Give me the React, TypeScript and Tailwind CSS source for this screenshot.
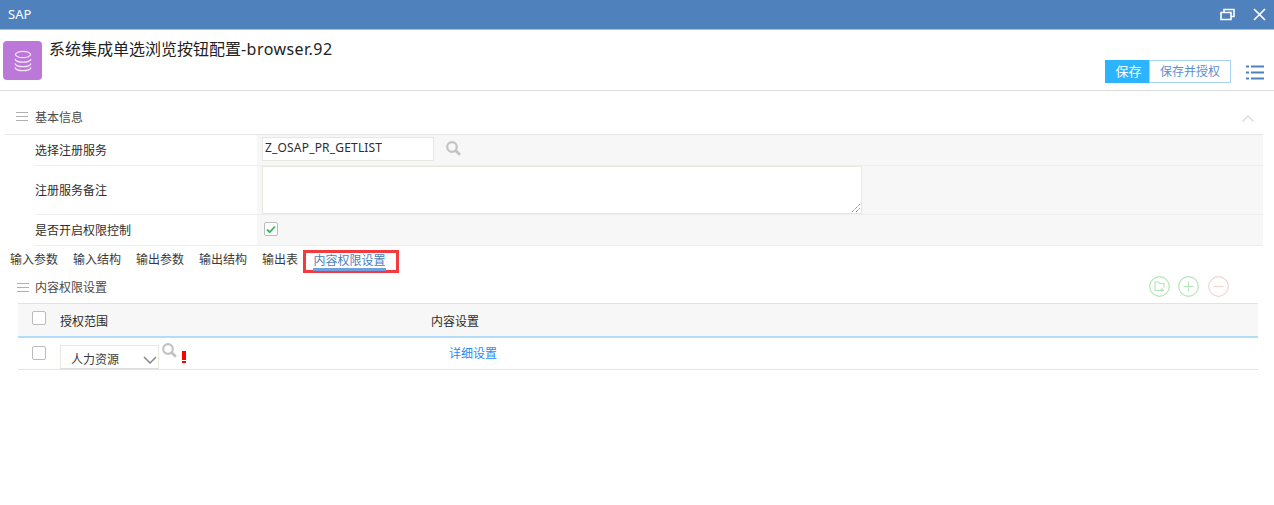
import React from "react";

const font = { fontFamily: '"Noto Sans","Noto Sans CJK SC",sans-serif' };

function Lines({ className }: { className: string }) {
  return (
    <svg width="12" height="10" viewBox="0 0 12 10" className={className}>
      <path d="M0 .5h12M0 4.5h12M0 8.5h12" stroke="#b0b0b0" strokeWidth="1" />
    </svg>
  );
}

function Search({ className }: { className: string }) {
  return (
    <svg width="15" height="15" viewBox="0 0 15 15" className={className}>
      <circle cx="6" cy="6" r="4.800" fill="none" stroke="#c2c2c2" strokeWidth="2.200" />
      <path d="M9.500 9.500l4.500 4.200" stroke="#c2c2c2" strokeWidth="2.800" />
    </svg>
  );
}

function Tab({ label }: { label: string }) {
  return <span className="text-[12px] leading-[16px] text-[#3a3a3a] mr-[14px] mt-[2px] w-[49px]">{label}</span>;
}

function Row({ label, h, children }: { label: string; h: string; children: React.ReactNode }) {
  return (
    <div className={`flex ${h}`}>
      <div className="w-[252px] pl-[30px] shrink-0">
        <div className="h-full flex items-center text-[12px] text-[#2e2e2e] border-b border-[#eeeeee] pt-[2px]">{label}</div>
      </div>
      <div className="flex-1 bg-[#f7f7f7] border-b border-[#eeeeee] flex items-start">{children}</div>
    </div>
  );
}

export default function App() {
  return (
    <div className="w-[1274px] h-[505px] bg-white overflow-hidden" style={font}>
      <div className="h-[30px] bg-[#4f81bd] border-b border-[#a9bcd3] flex items-center justify-between pl-[8px] pr-[8px]">
        <span className="text-[13px] text-white">SAP</span>
        <div className="flex items-center gap-[18px]">
          <svg width="15" height="13" viewBox="0 0 15 13">
            <path d="M1 4.500h10v7H1zM4 4V1.500h10V8.500h-3" fill="none" stroke="#fff" strokeWidth="1.600" />
          </svg>
          <svg width="13" height="13" viewBox="0 0 13 13">
            <path d="M1 1l11 11M12 1L1 12" stroke="#fff" strokeWidth="1.700" />
          </svg>
        </div>
      </div>

      <div className="h-[61px] border-b border-[#dddddd] flex relative">
        <div className="w-[39px] h-[39px] ml-[3px] mt-[11px] rounded-[4px] bg-[#bb78d9] flex items-center justify-center">
          <svg width="18" height="22" viewBox="0 0 18 22" fill="none" stroke="#f3e4fa" strokeWidth="1.300">
            <ellipse cx="9" cy="4.500" rx="7.500" ry="3.200" />
            <path d="M1 9c.6 1.900 3.800 3.200 8 3.200s7.400-1.300 8-3.200M1 13.500c.6 1.900 3.800 3.200 8 3.200s7.400-1.300 8-3.200M1 17.500c.6 1.900 3.800 3.200 8 3.200s7.400-1.300 8-3.200" />
          </svg>
        </div>
        <div className="ml-[7px] mt-[8px] text-[16px] leading-[22px] text-[#222]">
          系统集成单选浏览按钮配置<span className="tracking-[0.45px]">-browser.92</span>
        </div>
        <div className="ml-auto mt-[30px] mr-[10px] flex items-start">
          <div className="w-[44px] h-[23px] bg-[#2db4ff] text-white text-[13px] leading-[23px] text-center pl-[3px]">保存</div>
          <div className="w-[82px] h-[23px] border border-[#a9d0f5] text-[#5b8fd0] text-[12px] leading-[21px] text-center">保存并授权</div>
          <svg width="18" height="15" viewBox="0 0 18 15" className="ml-[15px] mt-[5px]">
            <path d="M0 1.500h3M5 1.500h13M0 7.500h3M5 7.500h13M0 13.500h3M5 13.500h13" stroke="#4f81bd" strokeWidth="2" />
          </svg>
        </div>
      </div>

      <div className="h-[43px] pl-[16px] pr-[20px] flex items-center">
        <Lines className="mr-[7px] mt-[9px]" />
        <span className="text-[12px] text-[#4a4a4a] mt-[11px]">基本信息</span>
        <svg width="12" height="7" viewBox="0 0 12 7" className="ml-auto mt-[11px]">
          <path d="M.5 6.500l5.500-5.500 5.500 5.500" fill="none" stroke="#d8d8d8" strokeWidth="1.200" />
        </svg>
      </div>

      <div className="ml-[5px] w-[1258px] border-t border-[#e6e6e6]">
        <Row label="选择注册服务" h="h-[31px]">
          <div className="ml-[5px] mt-[2px] w-[172px] h-[24px] bg-white border border-[#e8e8e0] pl-[2px] text-[12px] leading-[20px] text-[#2e2e2e] tracking-[0.18px]">Z_OSAP_PR_GETLIST</div>
          <Search className="ml-[12px] mt-[6px]" />
        </Row>
        <Row label="注册服务备注" h="h-[49px]">
          <div className="ml-[5px] w-[600px] h-[48px] bg-white border border-[#e8e8e0] relative">
            <svg width="8" height="8" viewBox="0 0 8 8" className="absolute right-[1px] bottom-[1px]">
              <path d="M0 8l8-8M4 8l4-4" stroke="#666" strokeWidth="1" strokeDasharray="1 1" />
            </svg>
          </div>
        </Row>
        <Row label="是否开启权限控制" h="h-[31px]">
          <div className="ml-[7px] mt-[7px] w-[14px] h-[14px] bg-white border border-[#bbbbbb] rounded-[2px] flex items-center justify-center">
            <svg width="10" height="9" viewBox="0 0 10 9">
              <path d="M1 4.500l2.700 2.700L9 1.500" fill="none" stroke="#3cb85c" strokeWidth="1.800" />
            </svg>
          </div>
        </Row>
      </div>

      <div className="h-[27px] pl-[10px] flex items-start pt-[4px]">
        <Tab label="输入参数" />
        <Tab label="输入结构" />
        <Tab label="输出参数" />
        <Tab label="输出结构" />
        <span className="text-[12px] leading-[16px] text-[#3a3a3a] w-[36px] mr-[5px] mt-[2px]">输出表</span>
        <div className="w-[96px] h-[23px] border-[3px] border-[#f23a3f] flex justify-center pr-[3px]">
          <span className="text-[12px] leading-[15px] text-[#4a7fc0] h-[18px] border-b-[3px] border-[#6f9fdc]">内容权限设置</span>
        </div>
      </div>

      <div className="h-[30px] pl-[17px] pr-[45px] flex items-start">
        <Lines className="mr-[6px] mt-[10px]" />
        <span className="text-[12px] text-[#4a4a4a] mt-[6px]">内容权限设置</span>
        <div className="ml-auto flex gap-[8px] mt-[3px]">
          <svg width="21" height="21" viewBox="0 0 21 21" fill="none" stroke="#b5e6b8" strokeWidth="1.200">
            <circle cx="10.500" cy="10.500" r="9.800" />
            <path d="M15 14.500H6V6h3.500l1.200 1.500H15v4M13 12v4M11 14h4" />
          </svg>
          <svg width="21" height="21" viewBox="0 0 21 21" fill="none" stroke="#b5e6b8" strokeWidth="1.200">
            <circle cx="10.500" cy="10.500" r="9.800" />
            <path d="M10.500 5.500v10M5.500 10.500h10" />
          </svg>
          <svg width="21" height="21" viewBox="0 0 21 21" fill="none" stroke="#f6d3d3" strokeWidth="1.200" className="ml-[1px]">
            <circle cx="10.500" cy="10.500" r="9.800" />
            <path d="M5.500 10.500h10" />
          </svg>
        </div>
      </div>

      <div className="ml-[18px] w-[1240px]">
        <div className="h-[35px] border-t border-[#e2e2e2] border-b-2 border-b-[#b3dcf7] bg-[#f7f7f7] flex items-start">
          <div className="w-[14px] h-[14px] ml-[14px] mt-[7px] border border-[#bbbbbb] bg-white rounded-[2px]" />
          <span className="w-[371px] ml-[14px] mt-[9px] text-[12px] text-[#2a2a2a]">授权范围</span>
          <span className="mt-[9px] text-[12px] text-[#2a2a2a]">内容设置</span>
        </div>
        <div className="h-[32px] border-b border-[#e4e4e4] flex items-start">
          <div className="w-[14px] h-[14px] ml-[14px] mt-[8px] border border-[#bbbbbb] bg-white rounded-[2px]" />
          <div className="ml-[14px] mt-[7px] w-[99px] h-[24px] border border-[#e8e8e0] border-b-[#dddddd] bg-white flex items-center pl-[10px] pt-[5px] text-[12px] text-[#3a3a3a]">
            人力资源
            <svg width="14" height="8" viewBox="0 0 14 8" className="ml-auto mr-[1px]">
              <path d="M1 1l6 6 6-6" fill="none" stroke="#888" strokeWidth="1.500" />
            </svg>
          </div>
          <Search className="ml-[3px] mt-[5px]" />
          <span className="ml-[5px] mt-[13px] w-[4px] h-[12px] shrink-0 flex flex-col">
            <span className="h-[9px] shrink-0 bg-[#f00]" />
            <span className="h-[2px] shrink-0 bg-[#f00] mt-[1px]" />
          </span>
          <span className="ml-[263px] mt-[7px] text-[12px] text-[#1a8cff]">详细设置</span>
        </div>
      </div>
    </div>
  );
}
